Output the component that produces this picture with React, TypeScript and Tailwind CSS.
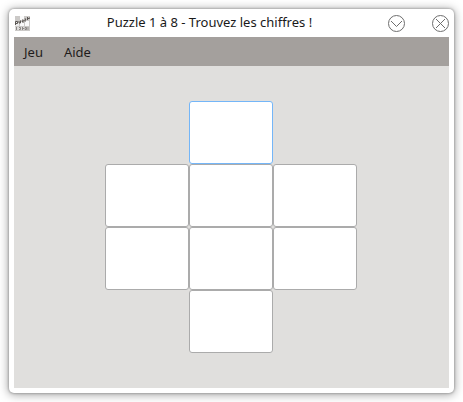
import React, { useState } from 'react';

interface Cell {
  id: number;
  place: string;
}

const CELLS: Cell[] = [
  { id: 1, place: 'col-start-2 row-start-1' },
  { id: 2, place: 'col-start-1 row-start-2' },
  { id: 3, place: 'col-start-2 row-start-2' },
  { id: 4, place: 'col-start-3 row-start-2' },
  { id: 5, place: 'col-start-1 row-start-3' },
  { id: 6, place: 'col-start-2 row-start-3' },
  { id: 7, place: 'col-start-3 row-start-3' },
  { id: 8, place: 'col-start-2 row-start-4' },
];

const AppIcon = () => (
  <svg viewBox="0 0 16 16" className="w-4 h-4 shrink-0" aria-hidden="true">
    <rect x="1" y="1" width="15" height="15" fill="#cbc9c7" />
    <path d="M6 1h4v4H6zM6 7h4v4H6zM11 6h4v5h-4z" fill="#fafafa" />
    <path d="M1 7h4v4H1z" fill="#ececec" />
    <path d="M1 12h14v3H1z" fill="#dddcdb" />
    <path d="M1.500 10V6.500h2v2h-2M5 6v2h1.500V5.500M8 5h1.500L8 7h2M10.500 4H12l-1.500 2H12M13.500 2v3M14 3.500h1.500V2.500" fill="none" stroke="#5a5653" strokeWidth="1" />
    <path d="M2.500 12v3M5 12.500h1.500v2H5M8.500 12v3M8 13.500h2M11 12.500h1.500v2H11zM14 12v3" fill="none" stroke="#8b8784" strokeWidth="1" />
  </svg>
);

const TitleBar = () => (
  <header className="flex items-center h-7 shrink-0">
    <AppIcon />
    <h1 className="flex-1 pl-[2px] pb-[2px] text-center text-[13px] leading-[18px] text-[#1a1a1a]">Puzzle 1 à 8 - Trouvez les chiffres !</h1>
    <div className="flex items-center gap-[26px]">
      <button type="button" aria-label="Réduire" className="w-[18px] h-[18px]">
        <svg viewBox="0 0 18 18" className="w-full h-full" fill="none" stroke="#6e6e6e">
          <circle cx="9.500" cy="9.500" r="8" />
          <path d="M4 7l5.500 5.500L15 7" />
        </svg>
      </button>
      <button type="button" aria-label="Fermer" className="w-[18px] h-[18px]">
        <svg viewBox="0 0 18 18" className="w-full h-full" fill="none" stroke="#6e6e6e">
          <circle cx="9.500" cy="9.500" r="8" />
          <path d="M5 5l9 9M14 5l-9 9" />
        </svg>
      </button>
    </div>
  </header>
);

const MenuBar = () => (
  <nav className="flex h-[29px] shrink-0 items-center gap-px bg-[#a4a09d] text-[13px] leading-5 text-[#1f1c1b]">
    <button type="button" className="px-[10px]">Jeu</button>
    <button type="button" className="px-[10px]">Aide</button>
  </nav>
);

export default function App() {
  const [values, setValues] = useState<Record<number, string>>({});
  const [active, setActive] = useState(1);

  return (
    <div className="flex min-h-screen bg-white p-[9px] font-['Noto_Sans',sans-serif]">
      <div className="flex flex-1 flex-col rounded-[5px] bg-white px-[5px] pb-[5px] shadow-[0_0_2px_1px_rgba(0,0,0,0.18),0_1px_10px_1px_rgba(0,0,0,0.35)]">
        <TitleBar />
        <MenuBar />
        <main className="flex flex-1 items-center justify-center bg-[#e0dfdd] pr-px">
          <div className="grid grid-cols-[repeat(3,84px)] grid-rows-[repeat(4,63px)]">
            {CELLS.map(c => (
              <input
                key={c.id}
                type="text"
                maxLength={1}
                aria-label={`Case ${c.id}`}
                value={values[c.id] ?? ''}
                onFocus={() => setActive(c.id)}
                onChange={e => setValues({ ...values, [c.id]: e.target.value.replace(/[^1-8]/g, '') })}
                className={`${c.place} min-w-0 rounded-[3px] border bg-white text-center text-2xl outline-none ${active === c.id ? 'border-[#74b6f8]' : 'border-[#ababab]'}`}
              />
            ))}
          </div>
        </main>
      </div>
    </div>
  );
}
